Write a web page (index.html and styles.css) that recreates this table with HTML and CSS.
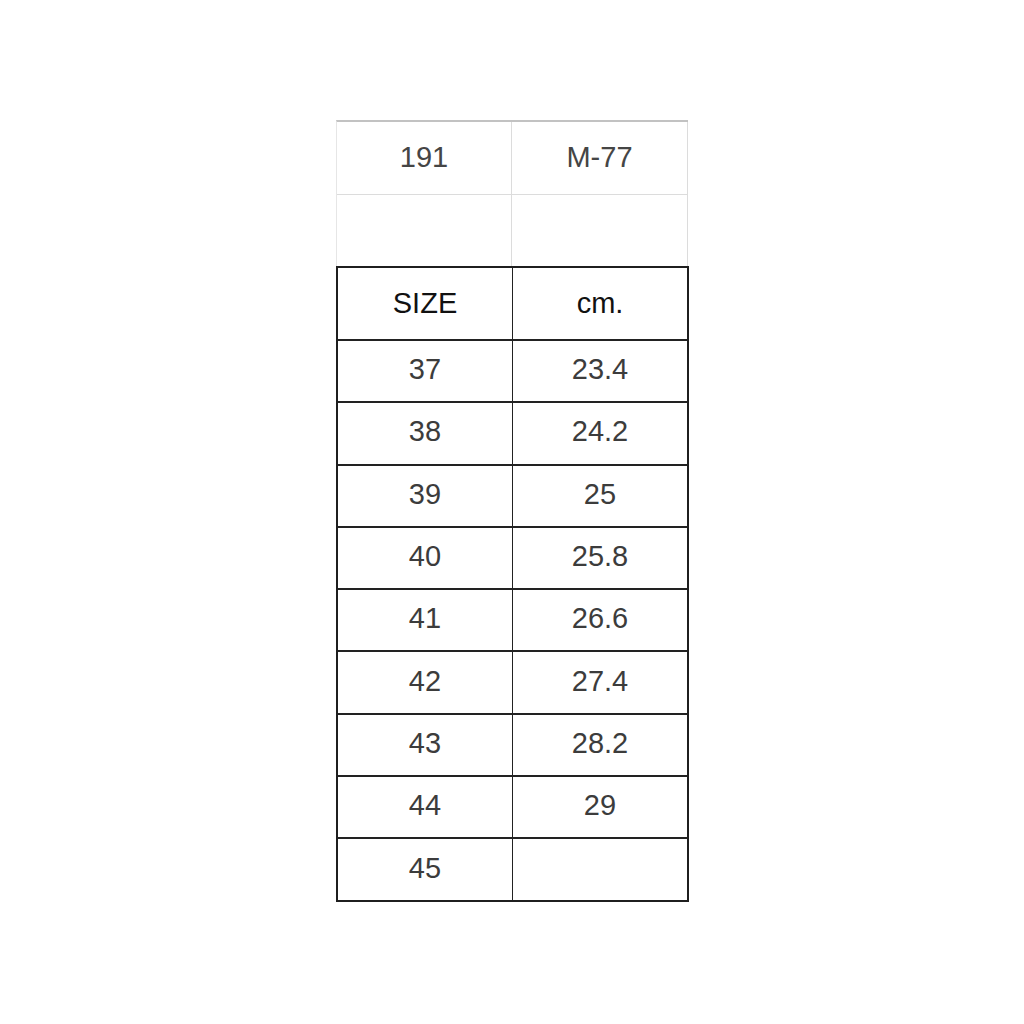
FILE: index.html
```html
<!DOCTYPE html>
<html>
<head>
<meta charset="utf-8">
<link rel="stylesheet" href="styles.css">
</head>
<body>
<div class="sheet">
  <div class="top">
    <div class="trow r1"><div class="cell">191</div><div class="cell">M-77</div></div>
    <div class="trow r2"><div class="cell"></div><div class="cell"></div></div>
  </div>
  <div class="chart">
    <div class="row head"><div class="cell">SIZE</div><div class="cell">cm.</div></div>
    <div class="row"><div class="cell">37</div><div class="cell">23.4</div></div>
    <div class="row"><div class="cell">38</div><div class="cell">24.2</div></div>
    <div class="row"><div class="cell">39</div><div class="cell">25</div></div>
    <div class="row"><div class="cell">40</div><div class="cell">25.8</div></div>
    <div class="row"><div class="cell">41</div><div class="cell">26.6</div></div>
    <div class="row"><div class="cell">42</div><div class="cell">27.4</div></div>
    <div class="row"><div class="cell">43</div><div class="cell">28.2</div></div>
    <div class="row"><div class="cell">44</div><div class="cell">29</div></div>
    <div class="row last"><div class="cell">45</div><div class="cell"></div></div>
  </div>
</div>
</body>
</html>
```
FILE: styles.css
```css
html, body {
  margin: 0;
  padding: 0;
  background: #ffffff;
}
body {
  font-family: "Liberation Sans", Arial, sans-serif;
  font-size: 29px;
  color: #3c3c3c;
}
.sheet {
  margin: 120px 0 0 336px;
  width: 354px;
}
.top {
  width: 352px;
  border-top: 2px solid #c2c2c2;
  border-left: 1px solid #e6e6e6;
  box-sizing: border-box;
}
.trow {
  display: grid;
  grid-template-columns: 175px 176px;
  box-sizing: border-box;
}
.trow.r1 {
  height: 73px;
  border-bottom: 1px solid #dcdcdc;
}
.trow.r2 {
  height: 71px;
}
.trow .cell {
  border-right: 1px solid #dcdcdc;
  display: flex;
  align-items: center;
  justify-content: center;
  color: #454545;
  padding-bottom: 2px;
  box-sizing: border-box;
}
.chart {
  width: 353px;
  border: 2px solid #1f1f1f;
  box-sizing: border-box;
}
.row {
  display: grid;
  grid-template-columns: 175px 174px;
  height: 62.3px;
  border-bottom: 2px solid #222222;
  box-sizing: border-box;
}
.row.head {
  height: 73px;
}
.row.last {
  border-bottom: none;
  height: 61px;
}
.row .cell {
  display: flex;
  align-items: center;
  justify-content: center;
  padding-bottom: 3px;
  box-sizing: border-box;
}
.row .cell:first-child {
  border-right: 1.5px solid #222222;
}
.row.head .cell {
  color: #111111;
  padding-bottom: 0;
}
```
